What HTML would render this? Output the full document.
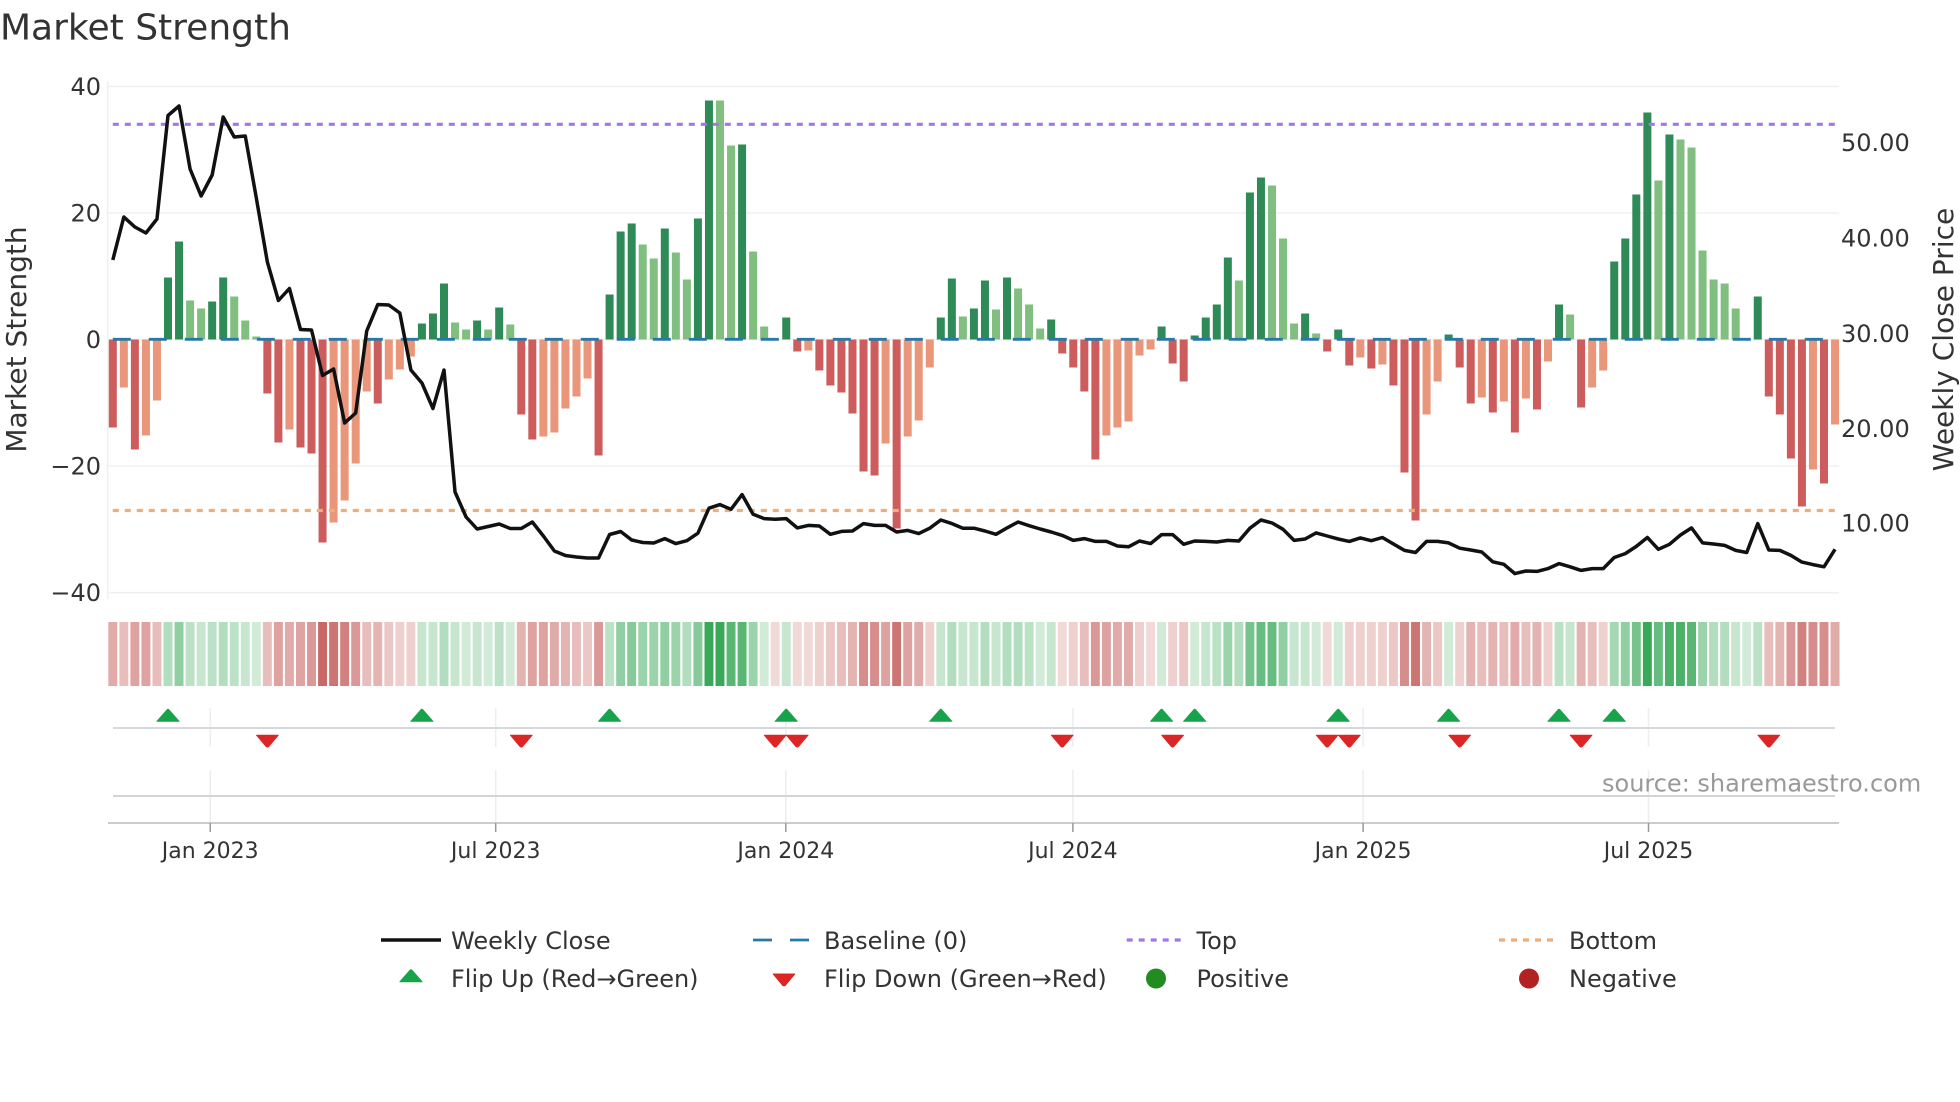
<!DOCTYPE html>
<html lang="en">
<head>
<meta charset="utf-8">
<title>Market Strength</title>
<style>
html,body{margin:0;padding:0;background:#fff}
svg{display:block}
text{font-family:"DejaVu Sans","Liberation Sans",sans-serif;fill:#333}
.c path{fill:none;stroke-width:.81}
.r0{stroke:#c0504d;stroke-opacity:.22}.r1{stroke:#c0504d;stroke-opacity:.27}.r2{stroke:#c0504d;stroke-opacity:.32}.r3{stroke:#c0504d;stroke-opacity:.37}.r4{stroke:#c0504d;stroke-opacity:.43}.r5{stroke:#c0504d;stroke-opacity:.48}.r6{stroke:#c0504d;stroke-opacity:.53}.r7{stroke:#c0504d;stroke-opacity:.58}.r8{stroke:#c0504d;stroke-opacity:.65}.r9{stroke:#c0504d;stroke-opacity:.72}.r10{stroke:#c0504d;stroke-opacity:.79}.r11{stroke:#c0504d;stroke-opacity:.86}
.g0{stroke:#2da44e;stroke-opacity:.22}.g1{stroke:#2da44e;stroke-opacity:.27}.g2{stroke:#2da44e;stroke-opacity:.32}.g3{stroke:#2da44e;stroke-opacity:.37}.g4{stroke:#2da44e;stroke-opacity:.43}.g5{stroke:#2da44e;stroke-opacity:.48}.g6{stroke:#2da44e;stroke-opacity:.53}.g7{stroke:#2da44e;stroke-opacity:.58}.g8{stroke:#2da44e;stroke-opacity:.65}.g9{stroke:#2da44e;stroke-opacity:.72}.g10{stroke:#2da44e;stroke-opacity:.79}.g11{stroke:#2da44e;stroke-opacity:.86}.g12{stroke:#2da44e;stroke-opacity:.94}
</style>
</head>
<body>
<svg xmlns="http://www.w3.org/2000/svg" width="1960" height="1102" viewBox="0 0 1960 1102">
<defs>
<path id="u" d="M-11.4 12.4L-1.2 .8Q0 -.4 1.2 .8L11.4 12.4Q12 13.2 11 13.2H-11Q-12 13.2 -11.4 12.4Z" fill="#16a34a"/>
<path id="d" d="M-11.2 .8L-1.6 12.2Q0 13.4 1.6 12.2L11.2 .8Q11.8 0 10.8 0H-10.8Q-11.8 0 -11.2 .8Z" fill="#dc2626"/>
</defs>
<rect width="1960" height="1102" fill="#fff"/>

<text x="0" y="39.5" font-size="36">Market Strength</text>

<!-- grid -->
<g stroke="#eff0f2" stroke-width="1.6" fill="none">
<path d="M108 86.5H1839M108 213H1839M108 339.5H1839M108 466H1839M108 592.7H1839"/>
<path d="M107.7 81V599"/>
</g>

<!-- axis labels -->
<g font-size="24" text-anchor="end">
<text x="101" y="95">40</text>
<text x="101" y="221.5">20</text>
<text x="101" y="348">0</text>
<text x="101" y="474.5">−20</text>
<text x="101" y="601">−40</text>
</g>
<g font-size="24">
<text x="1841" y="150.8">50.00</text>
<text x="1841" y="246.5">40.00</text>
<text x="1841" y="341.9">30.00</text>
<text x="1841" y="436.9">20.00</text>
<text x="1841" y="531.5">10.00</text>
</g>
<text font-size="28" text-anchor="middle" transform="translate(26 339.5) rotate(-90)">Market Strength</text>
<text font-size="28" text-anchor="middle" transform="translate(1953 339.5) rotate(-90)">Weekly Close Price</text>

<!-- bars -->
<g transform="translate(112.8 339.5) scale(11.04 1)" fill="none" stroke-width=".725">
<path stroke="#cd5c5c" d="M0 0V88M2 0V110M14 0V54M15 0V103M17 0V108M18 0V114M19 0V203M24 0V64M37 0V75M38 0V100M44 0V116M62 0V12M64 0V31M65 0V46M66 0V53M67 0V74M68 0V132M69 0V136M71 0V189M86 0V14M87 0V28M88 0V52M89 0V120M96 0V24M97 0V42M110 0V12M112 0V26M114 0V29M116 0V46M117 0V133M118 0V181M122 0V28M123 0V64M125 0V73M127 0V93M129 0V70M133 0V68M150 0V57M151 0V75M152 0V119M153 0V167M155 0V144"/>
<path stroke="#e9967a" d="M1 0V48M3 0V96M4 0V61M16 0V90M20 0V183M21 0V161M22 0V124M23 0V52M25 0V40M26 0V30M27 0V17M39 0V97M40 0V93M41 0V69M42 0V57M43 0V39M60 0V1M63 0V11M70 0V104M72 0V97M73 0V81M74 0V28M90 0V96M91 0V88M92 0V82M93 0V16M94 0V10M113 0V18M115 0V25M119 0V75M120 0V42M124 0V58M126 0V62M128 0V59M130 0V22M134 0V48M135 0V31M154 0V130M156 0V85"/>
<path stroke="#2e8b57" d="M5 0V-62M6 0V-98M9 0V-38M10 0V-62M28 0V-16M29 0V-26M30 0V-56M33 0V-19M35 0V-32M45 0V-45M46 0V-108M47 0V-116M50 0V-111M53 0V-121M54 0V-239M57 0V-195M61 0V-22M75 0V-22M76 0V-61M78 0V-31M79 0V-59M81 0V-62M85 0V-20M95 0V-13M98 0V-4M99 0V-22M100 0V-35M101 0V-82M103 0V-147M104 0V-162M108 0V-26M111 0V-10M121 0V-5M131 0V-35M136 0V-78M137 0V-101M138 0V-145M139 0V-227M141 0V-205M149 0V-43"/>
<path stroke="#80bf80" d="M7 0V-39M8 0V-31M11 0V-43M12 0V-19M13 0V-3M31 0V-17M32 0V-10M34 0V-10M36 0V-15M48 0V-95M49 0V-81M51 0V-87M52 0V-60M55 0V-239M56 0V-194M58 0V-88M59 0V-13M77 0V-23M80 0V-30M82 0V-51M83 0V-35M84 0V-11M102 0V-59M105 0V-154M106 0V-101M107 0V-16M109 0V-6M132 0V-25M140 0V-159M142 0V-200M143 0V-192M144 0V-89M145 0V-60M146 0V-56M147 0V-31"/>
</g>

<!-- reference lines -->
<g fill="none">
<path d="M112.8 339.3H1835" stroke="#2878a8" stroke-width="2.8" stroke-dasharray="18 18"/>
<path d="M112.8 124.3H1835" stroke="#a478e2" stroke-width="3.2" stroke-dasharray="6 6"/>
<path d="M112.8 510.5H1835" stroke="#edae7a" stroke-width="3.2" stroke-dasharray="6 6"/>
</g>

<!-- close line -->
<g transform="translate(112.8 0) scale(11.04 1)">
<polyline fill="none" stroke="#111" stroke-width="3.5" stroke-linejoin="round" vector-effect="non-scaling-stroke" points="0,260 1,217 2,227 3,233 4,219 5,115.5 6,106 7,169 8,196 9,175 10,117 11,137 12,136 13,198 14,262 15,300.5 16,288.5 17,329.5 18,330 19,375.5 20,369 21,423 22,413 23,331 24,304.5 25,305 26,313 27,370 28,383 29,408.5 30,370 31,492 32,517 33,529 34,526.5 35,524 36,528.5 37,528.5 38,522 39,536 40,551 41,555.5 42,557 43,558 44,558 45,534.5 46,531.5 47,540 48,542.5 49,543 50,538.6 51,543.6 52,540.7 53,533.2 54,508.2 55,504.6 56,509.3 57,494.6 58,514.3 59,518.6 60,519.3 61,518.6 62,527.9 63,525.4 64,526 65,534.3 66,531.4 67,531 68,523.6 69,525.4 70,525.4 71,532 72,530.4 73,533.6 74,528.2 75,520 76,523.6 77,528.2 78,528.2 79,531 80,534.3 81,527.9 82,522 83,525.7 84,529 85,532 86,535.4 87,540.4 88,538.6 89,541.4 90,541.4 91,546 92,546.8 93,541 94,543.6 95,534.6 96,534.6 97,544.3 98,541 99,541.4 100,542 101,540.4 102,541 103,528.2 104,520 105,522.9 106,529.3 107,540.4 108,539 109,532.9 110,536 111,539 112,541.4 113,537.9 114,540.7 115,537.5 116,544 117,550.4 118,552.5 119,541.4 120,541.4 121,542.9 122,548.2 123,550 124,552 125,561.8 126,564.3 127,573.6 128,571 129,571.4 130,568.6 131,563.6 132,566.8 133,570.4 134,568.6 135,568.6 136,557.5 137,553.6 138,546.4 139,537.5 140,549.3 141,544.3 142,535 143,527.9 144,542.9 145,544 146,545.4 147,550.4 148,552.5 149,523.6 150,550 151,550.4 152,555.4 153,562.1 154,564.6 155,566.8 156,549.3"/>
</g>

<!-- heat strip -->
<g class="c" transform="translate(112.8 622) scale(11.04 1)">
<path class="r5" d="M0 0V64"/><path class="r3" d="M1 0V64"/><path class="r6" d="M2 0V64"/><path class="r6" d="M3 0V64"/><path class="r3" d="M4 0V64"/><path class="g3" d="M5 0V64"/><path class="g6" d="M6 0V64"/><path class="g2" d="M7 0V64"/><path class="g1" d="M8 0V64"/><path class="g2" d="M9 0V64"/><path class="g3" d="M10 0V64"/><path class="g2" d="M11 0V64"/><path class="g1" d="M12 0V64"/><path class="g0" d="M13 0V64"/><path class="r3" d="M14 0V64"/><path class="r6" d="M15 0V64"/><path class="r5" d="M16 0V64"/><path class="r6" d="M17 0V64"/><path class="r7" d="M18 0V64"/><path class="r11" d="M19 0V64"/><path class="r10" d="M20 0V64"/><path class="r9" d="M21 0V64"/><path class="r7" d="M22 0V64"/><path class="r3" d="M23 0V64"/><path class="r4" d="M24 0V64"/><path class="r2" d="M25 0V64"/><path class="r1" d="M26 0V64"/><path class="r1" d="M27 0V64"/><path class="g1" d="M28 0V64"/><path class="g1" d="M29 0V64"/><path class="g3" d="M30 0V64"/><path class="g1" d="M31 0V64"/><path class="g0" d="M32 0V64"/><path class="g1" d="M33 0V64"/><path class="g0" d="M34 0V64"/><path class="g2" d="M35 0V64"/><path class="g0" d="M36 0V64"/><path class="r4" d="M37 0V64"/><path class="r6" d="M38 0V64"/><path class="r6" d="M39 0V64"/><path class="r5" d="M40 0V64"/><path class="r4" d="M41 0V64"/><path class="r3" d="M42 0V64"/><path class="r2" d="M43 0V64"/><path class="r7" d="M44 0V64"/><path class="g2" d="M45 0V64"/><path class="g6" d="M46 0V64"/><path class="g7" d="M47 0V64"/><path class="g5" d="M48 0V64"/><path class="g5" d="M49 0V64"/><path class="g6" d="M50 0V64"/><path class="g5" d="M51 0V64"/><path class="g3" d="M52 0V64"/><path class="g7" d="M53 0V64"/><path class="g12" d="M54 0V64"/><path class="g12" d="M55 0V64"/><path class="g10" d="M56 0V64"/><path class="g10" d="M57 0V64"/><path class="g5" d="M58 0V64"/><path class="g0" d="M59 0V64"/><path class="r0" d="M60 0V64"/><path class="g1" d="M61 0V64"/><path class="r0" d="M62 0V64"/><path class="r0" d="M63 0V64"/><path class="r1" d="M64 0V64"/><path class="r2" d="M65 0V64"/><path class="r3" d="M66 0V64"/><path class="r4" d="M67 0V64"/><path class="r8" d="M68 0V64"/><path class="r8" d="M69 0V64"/><path class="r6" d="M70 0V64"/><path class="r10" d="M71 0V64"/><path class="r6" d="M72 0V64"/><path class="r5" d="M73 0V64"/><path class="r1" d="M74 0V64"/><path class="g1" d="M75 0V64"/><path class="g3" d="M76 0V64"/><path class="g1" d="M77 0V64"/><path class="g1" d="M78 0V64"/><path class="g3" d="M79 0V64"/><path class="g1" d="M80 0V64"/><path class="g3" d="M81 0V64"/><path class="g3" d="M82 0V64"/><path class="g2" d="M83 0V64"/><path class="g0" d="M84 0V64"/><path class="g1" d="M85 0V64"/><path class="r0" d="M86 0V64"/><path class="r1" d="M87 0V64"/><path class="r3" d="M88 0V64"/><path class="r7" d="M89 0V64"/><path class="r6" d="M90 0V64"/><path class="r5" d="M91 0V64"/><path class="r5" d="M92 0V64"/><path class="r1" d="M93 0V64"/><path class="r0" d="M94 0V64"/><path class="g0" d="M95 0V64"/><path class="r1" d="M96 0V64"/><path class="r2" d="M97 0V64"/><path class="g0" d="M98 0V64"/><path class="g1" d="M99 0V64"/><path class="g2" d="M100 0V64"/><path class="g5" d="M101 0V64"/><path class="g3" d="M102 0V64"/><path class="g8" d="M103 0V64"/><path class="g9" d="M104 0V64"/><path class="g9" d="M105 0V64"/><path class="g6" d="M106 0V64"/><path class="g1" d="M107 0V64"/><path class="g1" d="M108 0V64"/><path class="g0" d="M109 0V64"/><path class="r0" d="M110 0V64"/><path class="g0" d="M111 0V64"/><path class="r1" d="M112 0V64"/><path class="r1" d="M113 0V64"/><path class="r1" d="M114 0V64"/><path class="r1" d="M115 0V64"/><path class="r2" d="M116 0V64"/><path class="r8" d="M117 0V64"/><path class="r10" d="M118 0V64"/><path class="r4" d="M119 0V64"/><path class="r2" d="M120 0V64"/><path class="g0" d="M121 0V64"/><path class="r1" d="M122 0V64"/><path class="r4" d="M123 0V64"/><path class="r3" d="M124 0V64"/><path class="r4" d="M125 0V64"/><path class="r3" d="M126 0V64"/><path class="r5" d="M127 0V64"/><path class="r3" d="M128 0V64"/><path class="r4" d="M129 0V64"/><path class="r1" d="M130 0V64"/><path class="g2" d="M131 0V64"/><path class="g1" d="M132 0V64"/><path class="r4" d="M133 0V64"/><path class="r3" d="M134 0V64"/><path class="r1" d="M135 0V64"/><path class="g4" d="M136 0V64"/><path class="g6" d="M137 0V64"/><path class="g8" d="M138 0V64"/><path class="g12" d="M139 0V64"/><path class="g9" d="M140 0V64"/><path class="g11" d="M141 0V64"/><path class="g11" d="M142 0V64"/><path class="g10" d="M143 0V64"/><path class="g5" d="M144 0V64"/><path class="g3" d="M145 0V64"/><path class="g3" d="M146 0V64"/><path class="g1" d="M147 0V64"/><path class="g0" d="M148 0V64"/><path class="g2" d="M149 0V64"/><path class="r3" d="M150 0V64"/><path class="r4" d="M151 0V64"/><path class="r7" d="M152 0V64"/><path class="r9" d="M153 0V64"/><path class="r8" d="M154 0V64"/><path class="r8" d="M155 0V64"/><path class="r5" d="M156 0V64"/>
</g>

<!-- lower panels -->
<g fill="none" stroke="#eceef2" stroke-width="1.5">
<path d="M210.2 708V747M495.7 708V747M785.8 708V747M1072.9 708V747M1363.1 708V747M1648.5 708V747"/>
<path d="M210.2 770V823M495.7 770V823M785.8 770V823M1072.9 770V823M1363.1 770V823M1648.5 770V823"/>
</g>
<g fill="none">
<path d="M113 728H1835" stroke="#d5d8dc" stroke-width="2"/>
<path d="M113 796H1835" stroke="#d2d4d6" stroke-width="2"/>
<path d="M108 823H1839" stroke="#cccccc" stroke-width="2"/>
<path d="M210.2 823V832M495.7 823V832M785.8 823V832M1072.9 823V832M1363.1 823V832M1648.5 823V832" stroke="#999" stroke-width="1.5"/>
</g>

<!-- flips -->
<use href="#u" x="168" y="708.6"/><use href="#u" x="421.9" y="708.6"/><use href="#u" x="609.6" y="708.6"/><use href="#u" x="786.2" y="708.6"/><use href="#u" x="940.8" y="708.6"/><use href="#u" x="1161.6" y="708.6"/><use href="#u" x="1194.7" y="708.6"/><use href="#u" x="1338.2" y="708.6"/><use href="#u" x="1448.6" y="708.6"/><use href="#u" x="1559" y="708.6"/><use href="#u" x="1614.2" y="708.6"/>
<use href="#d" x="267.4" y="734.7"/><use href="#d" x="521.3" y="734.7"/><use href="#d" x="775.2" y="734.7"/><use href="#d" x="797.2" y="734.7"/><use href="#d" x="1062.2" y="734.7"/><use href="#d" x="1172.6" y="734.7"/><use href="#d" x="1327.2" y="734.7"/><use href="#d" x="1349.3" y="734.7"/><use href="#d" x="1459.7" y="734.7"/><use href="#d" x="1581.1" y="734.7"/><use href="#d" x="1768.8" y="734.7"/>

<!-- x ticks -->
<g font-size="22" text-anchor="middle">
<text x="210.2" y="858">Jan 2023</text>
<text x="495.7" y="858">Jul 2023</text>
<text x="785.8" y="858">Jan 2024</text>
<text x="1072.9" y="858">Jul 2024</text>
<text x="1363.1" y="858">Jan 2025</text>
<text x="1648.5" y="858">Jul 2025</text>
</g>

<text x="1602" y="791.7" font-size="24" style="fill:#999">source: sharemaestro.com</text>

<!-- legend -->
<g fill="none">
<path d="M381 940H441" stroke="#111" stroke-width="3.5"/>
<path d="M753 940H809" stroke="#2878a8" stroke-width="2.8" stroke-dasharray="19 18"/>
<path d="M1126.7 940H1182" stroke="#a478e2" stroke-width="3.2" stroke-dasharray="6 6"/>
<path d="M1499 940H1554" stroke="#edae7a" stroke-width="3.2" stroke-dasharray="6 6"/>
</g>
<use href="#u" x="411" y="969"/>
<use href="#d" x="784" y="973.5"/>
<circle cx="1156" cy="978.5" r="10" fill="#228b22"/>
<circle cx="1529" cy="978.5" r="10" fill="#b22222"/>
<g font-size="24">
<text x="451" y="949">Weekly Close</text>
<text x="824" y="949">Baseline (0)</text>
<text x="1196.5" y="949">Top</text>
<text x="1569" y="949">Bottom</text>
<text x="451" y="987">Flip Up (Red→Green)</text>
<text x="824" y="987">Flip Down (Green→Red)</text>
<text x="1196.5" y="987">Positive</text>
<text x="1569" y="987">Negative</text>
</g>
</svg>
</body>
</html>
